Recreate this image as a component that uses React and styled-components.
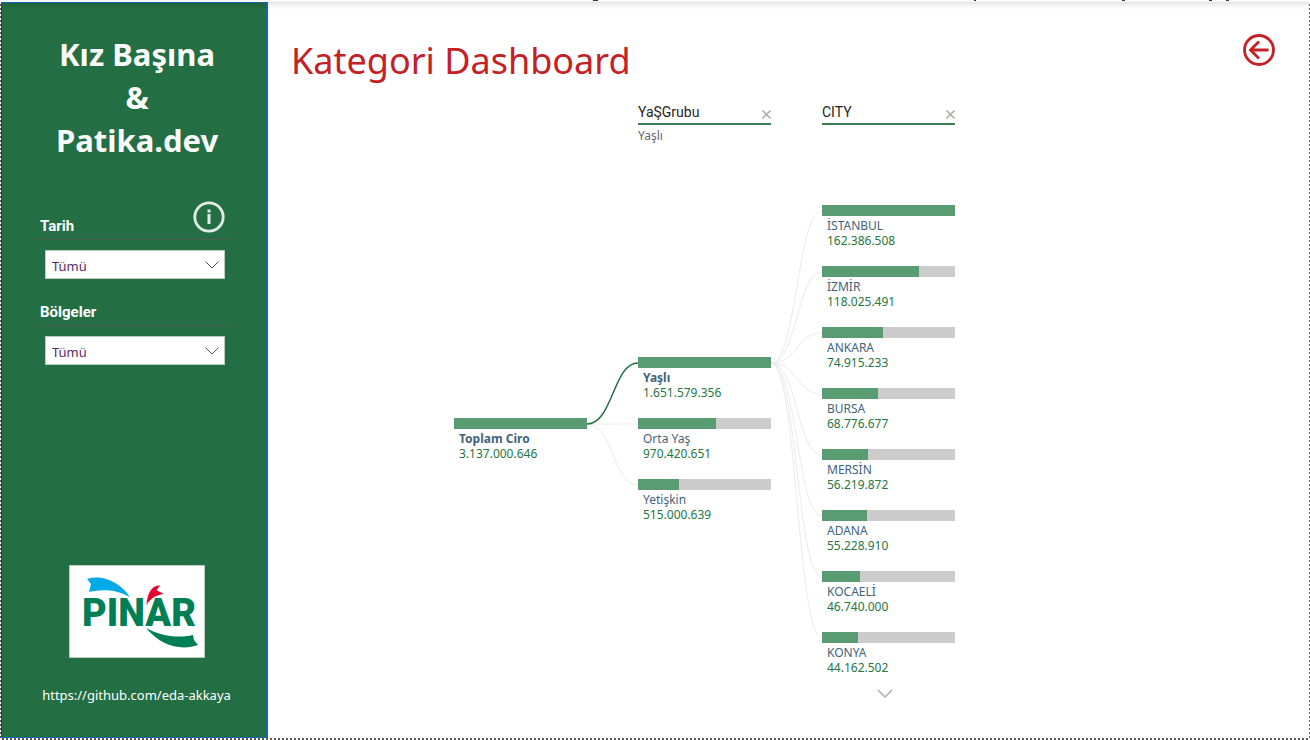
import React from "react";
import styled, { createGlobalStyle } from "styled-components";

const GlobalStyle = createGlobalStyle`
  *, *::before, *::after { box-sizing: border-box; }
  body { margin: 0; background: #fff; font-family: "Noto Sans", "Open Sans", sans-serif; }
  h1, h2, p { margin: 0; }
`;

const ui = `"Noto Sans", "Open Sans", sans-serif`;
const din = `Roboto, "Open Sans", sans-serif`;

const Page = styled.div`
  min-height: 100vh;
  display: flex;
  flex-direction: column;
  background:
    repeating-linear-gradient(to right, transparent 0 2px, #5c5c5c 2px 4px) left bottom / 100% 2px no-repeat,
    repeating-linear-gradient(to bottom, #5c5c5c 0 2px, transparent 2px 4px) left top / 1px 100% no-repeat,
    repeating-linear-gradient(to bottom, #5c5c5c 0 2px, transparent 2px 4px) right top / 1px 100% no-repeat,
    #fff;
`;

const TopEdge = styled.div`
  height: 2px;
  overflow: hidden;
  background: #f8f8f8;
  svg { display: block; }
`;

const Body = styled.div`
  flex: 1;
  display: flex;
  margin: 0 1px 2px;
`;

const Sidebar = styled.aside`
  width: 267px;
  flex: none;
  display: flex;
  flex-direction: column;
  padding: 30px 0 32px;
  background: linear-gradient(#1f613a, #236e42 6px);
  border: 1px solid #1768ae;
  border-left-color: #124f7c;
  border-right-width: 2px;
`;

const Brand = styled.h2`
  padding-left: 6px;
  text-align: center;
  color: #fafafa;
  font: 700 31px/43px ${ui};
`;

const Filters = styled.div`
  display: flex;
  flex-direction: column;
  gap: 23px;
  margin-top: 40px;
  padding: 0 32px 0 34px;
`;

const Filter = styled.div`
  display: flex;
  flex-direction: column;
`;

const FilterHead = styled.div`
  display: flex;
  align-items: flex-end;
  justify-content: space-between;
  height: ${(p) => (p.$tall ? 38 : 24)}px;
  padding: 0 9px 2px 4px;
  border-bottom: 1px solid #4b6150;
`;

const FilterLabel = styled.label`
  color: #fff;
  font: 700 15px/22px ${din};
`;

const InfoButton = styled.button`
  width: 32px;
  height: 32px;
  margin-bottom: 4px;
  padding: 0;
  border: 0;
  background: none;
  svg { display: block; }
`;

const SelectBox = styled.div`
  display: grid;
  align-items: center;
  margin: 10px 9px 0;
  > * { grid-area: 1 / 1; }
  > svg { justify-self: end; margin-right: 6px; pointer-events: none; }
`;

const Select = styled.select`
  appearance: none;
  width: 100%;
  height: 29px;
  padding: 2px 6px 0;
  border: 1px solid #b9cfc0;
  border-radius: 0;
  background: #fff;
  color: #5a2a63;
  font: 400 13px/20px ${ui};
`;

const LogoCard = styled.div`
  margin: auto auto 0 67px;
  width: 136px;
  border: 1px solid #b9cfc0;
  background: #fff;
  svg { display: block; }
`;

const LogoText = styled.text`
  font: 900 38px ${din};
`;

const RepoLink = styled.a`
  margin-top: 27px;
  padding-left: 5px;
  text-align: center;
  text-decoration: none;
  color: #fff;
  font: 400 13px/20px ${ui};
`;

const Main = styled.main`
  flex: 1;
  min-width: 0;
  background: linear-gradient(#e2e2e2, #f4f4f4 3px, #fff 8px);
`;

const Header = styled.header`
  display: flex;
  justify-content: space-between;
  align-items: flex-start;
  padding: 31px 33px 0 23px;
`;

const Title = styled.h1`
  color: #c42026;
  font: 400 36px/56px ${ui};
`;

const BackButton = styled.button`
  padding: 0;
  border: 0;
  background: none;
  svg { display: block; }
`;

const Tree = styled.section`
  display: flex;
  padding: 12px 0 24px 186px;
`;

const Column = styled.div`
  width: 133px;
  flex: none;
  display: flex;
  flex-direction: column;
`;

const ColumnHead = styled.div`
  height: 104px;
`;

const LevelBar = styled.div`
  display: flex;
  align-items: flex-end;
  justify-content: space-between;
  height: 24px;
  border-bottom: 2px solid #3a7d54;
`;

const LevelName = styled.h2`
  color: #252423;
  font: 400 14px/22px ${din};
`;

const CloseButton = styled.button`
  padding: 0 0 4px;
  border: 0;
  background: none;
  svg { display: block; }
`;

const LevelValue = styled.p`
  color: #666;
  font: 400 12px/22px ${ui};
`;

const Nodes = styled.div`
  display: flex;
  flex-direction: column;
  gap: 4px;
  padding-top: ${(p) => p.$offset}px;
`;

const Node = styled.div`
  height: 57px;
`;

const Track = styled.div`
  height: 11px;
  margin-bottom: 2px;
  background: #ccc;
`;

const Fill = styled.div`
  height: 100%;
  background: #5a9c72;
`;

const NodeName = styled.p`
  padding-left: 5px;
  color: #3f647a;
  font: ${(p) => (p.$bold ? 700 : 400)} 12px/15px ${ui};
`;

const NodeValue = styled.p`
  padding-left: 5px;
  color: #26763f;
  font: 400 12px/15px ${ui};
`;

const Links = styled.svg`
  flex: none;
  display: block;
  margin-top: 104px;
`;

const MoreButton = styled.button`
  align-self: center;
  padding: 0 7px 0 0;
  border: 0;
  background: none;
  svg { display: block; }
`;

const ages = [
  { name: "Yaşlı", value: "1.651.579.356", share: 100, selected: true },
  { name: "Orta Yaş", value: "970.420.651", share: 58.7 },
  { name: "Yetişkin", value: "515.000.639", share: 31.2 },
];

const cities = [
  { name: "İSTANBUL", value: "162.386.508", share: 100 },
  { name: "İZMİR", value: "118.025.491", share: 72.7 },
  { name: "ANKARA", value: "74.915.233", share: 46.1 },
  { name: "BURSA", value: "68.776.677", share: 42.4 },
  { name: "MERSİN", value: "56.219.872", share: 34.6 },
  { name: "ADANA", value: "55.228.910", share: 34 },
  { name: "KOCAELİ", value: "46.740.000", share: 28.8 },
  { name: "KONYA", value: "44.162.502", share: 27.2 },
];

const STEP = 61;
const AGE_OFFSET = 152;
const ROOT_OFFSET = 213;
const center = (offset, i) => offset + i * STEP + 6;
const curve = (from, to) => `M0 ${from} C26 ${from} 26 ${to} 51 ${to}`;

function TreeNode({ name, value, share, selected }) {
  return (
    <Node>
      <Track><Fill style={{ width: `${share}%` }} /></Track>
      <NodeName $bold={selected}>{name}</NodeName>
      <NodeValue>{value}</NodeValue>
    </Node>
  );
}

function Level({ name, value }) {
  return (
    <ColumnHead>
      <LevelBar>
        <LevelName>{name}</LevelName>
        <CloseButton aria-label="Kapat">
          <svg width="9" height="9" viewBox="0 0 9 9" stroke="#b3b0ad" strokeWidth="1.6">
            <path d="M.5.5l8 8M8.5.5l-8 8" />
          </svg>
        </CloseButton>
      </LevelBar>
      {value && <LevelValue>{value}</LevelValue>}
    </ColumnHead>
  );
}

function Dropdown({ id, label, info }) {
  return (
    <Filter>
      <FilterHead $tall={info}>
        <FilterLabel htmlFor={id}>{label}</FilterLabel>
        {info && (
          <InfoButton aria-label="Bilgi">
            <svg width="32" height="32" viewBox="0 0 32 32">
              <circle cx="16" cy="16" r="14.2" fill="none" stroke="#e3ebe6" strokeWidth="2.8" />
              <path d="M14.5 8.500h3v3h-3zM14.500 13h3V23h-3z" fill="#e3ebe6" />
            </svg>
          </InfoButton>
        )}
      </FilterHead>
      <SelectBox>
        <Select id={id}><option>Tümü</option></Select>
        <svg width="14" height="8" viewBox="0 0 14 8" fill="none" stroke="#6d3f76">
          <path d="M.5.5L7 7l6.5-6.5" />
        </svg>
      </SelectBox>
    </Filter>
  );
}

function PinarLogo() {
  return (
    <svg width="134" height="91" viewBox="0 0 134 91" role="img" aria-label="Pınar">
      <LogoText x="12" y="60" fill="#007f54">PINAR</LogoText>
      <path fill="#007f54" d="M76 62C89 69 106 73 123 69L124 74 128 79C111 85 91 80 76 62Z" />
      <path fill="#00a9e8" d="M17 13C34 8 50 17 60 31C46 23 31 23 19 26L21 18Z" />
      <path fill="#e4002f" stroke="#fff" strokeWidth="1" d="M76 41C76 29 81 18 91 19L87 24 95 28C86 30 80 32 76 41Z" />
    </svg>
  );
}

export default function App() {
  return (
    <Page>
      <GlobalStyle />
      <TopEdge>
        <svg width="1310" height="2" fill="#333" aria-hidden="true">
          <path d="M593 0h5v1h-5zM974 0h2v1h-2zM1122 0h3v1h-3zM1209 0h3v1h-3zM1226 0h3v1h-3z" />
        </svg>
      </TopEdge>
      <Body>
        <Sidebar>
          <Brand>Kız Başına<br />&amp;<br />Patika.dev</Brand>
          <Filters>
            <Dropdown id="tarih" label="Tarih" info />
            <Dropdown id="bolgeler" label="Bölgeler" />
          </Filters>
          <LogoCard><PinarLogo /></LogoCard>
          <RepoLink href="https://github.com/eda-akkaya">https://github.com/eda-akkaya</RepoLink>
        </Sidebar>
        <Main>
          <Header>
            <Title>Kategori Dashboard</Title>
            <BackButton aria-label="Geri">
              <svg width="34" height="34" viewBox="0 0 34 34" fill="none" stroke="#c42026" strokeWidth="2.8">
                <circle cx="17" cy="17" r="14.5" />
                <path d="M26.5 17H9M17 8.5L8.5 17l8.5 8.5" />
              </svg>
            </BackButton>
          </Header>
          <Tree>
            <Column>
              <ColumnHead />
              <Nodes $offset={ROOT_OFFSET}>
                <TreeNode name="Toplam Ciro" value="3.137.000.646" share={100} selected />
              </Nodes>
            </Column>
            <Links width="51" height="500" fill="none" stroke="#ebebeb" aria-hidden="true">
              <path d={curve(center(ROOT_OFFSET, 0), center(AGE_OFFSET, 1))} />
              <path d={curve(center(ROOT_OFFSET, 0), center(AGE_OFFSET, 2))} />
              <path d={curve(center(ROOT_OFFSET, 0), center(AGE_OFFSET, 0))} stroke="#236e42" strokeWidth="1.5" />
            </Links>
            <Column>
              <Level name="YaŞGrubu" value="Yaşlı" />
              <Nodes $offset={AGE_OFFSET}>
                {ages.map((n) => <TreeNode key={n.name} {...n} />)}
              </Nodes>
            </Column>
            <Links width="51" height="500" fill="none" stroke="#ebebeb" aria-hidden="true">
              {cities.map((n, i) => (
                <path key={n.name} d={curve(center(AGE_OFFSET, 0), center(0, i))} />
              ))}
            </Links>
            <Column>
              <Level name="CITY" />
              <Nodes $offset={0}>
                {cities.map((n) => <TreeNode key={n.name} {...n} />)}
              </Nodes>
              <MoreButton aria-label="Daha fazla">
                <svg width="16" height="9" viewBox="0 0 16 9" fill="none" stroke="#b3b0ad" strokeWidth="1.6">
                  <path d="M1 1l7 7 7-7" />
                </svg>
              </MoreButton>
            </Column>
          </Tree>
        </Main>
      </Body>
    </Page>
  );
}
